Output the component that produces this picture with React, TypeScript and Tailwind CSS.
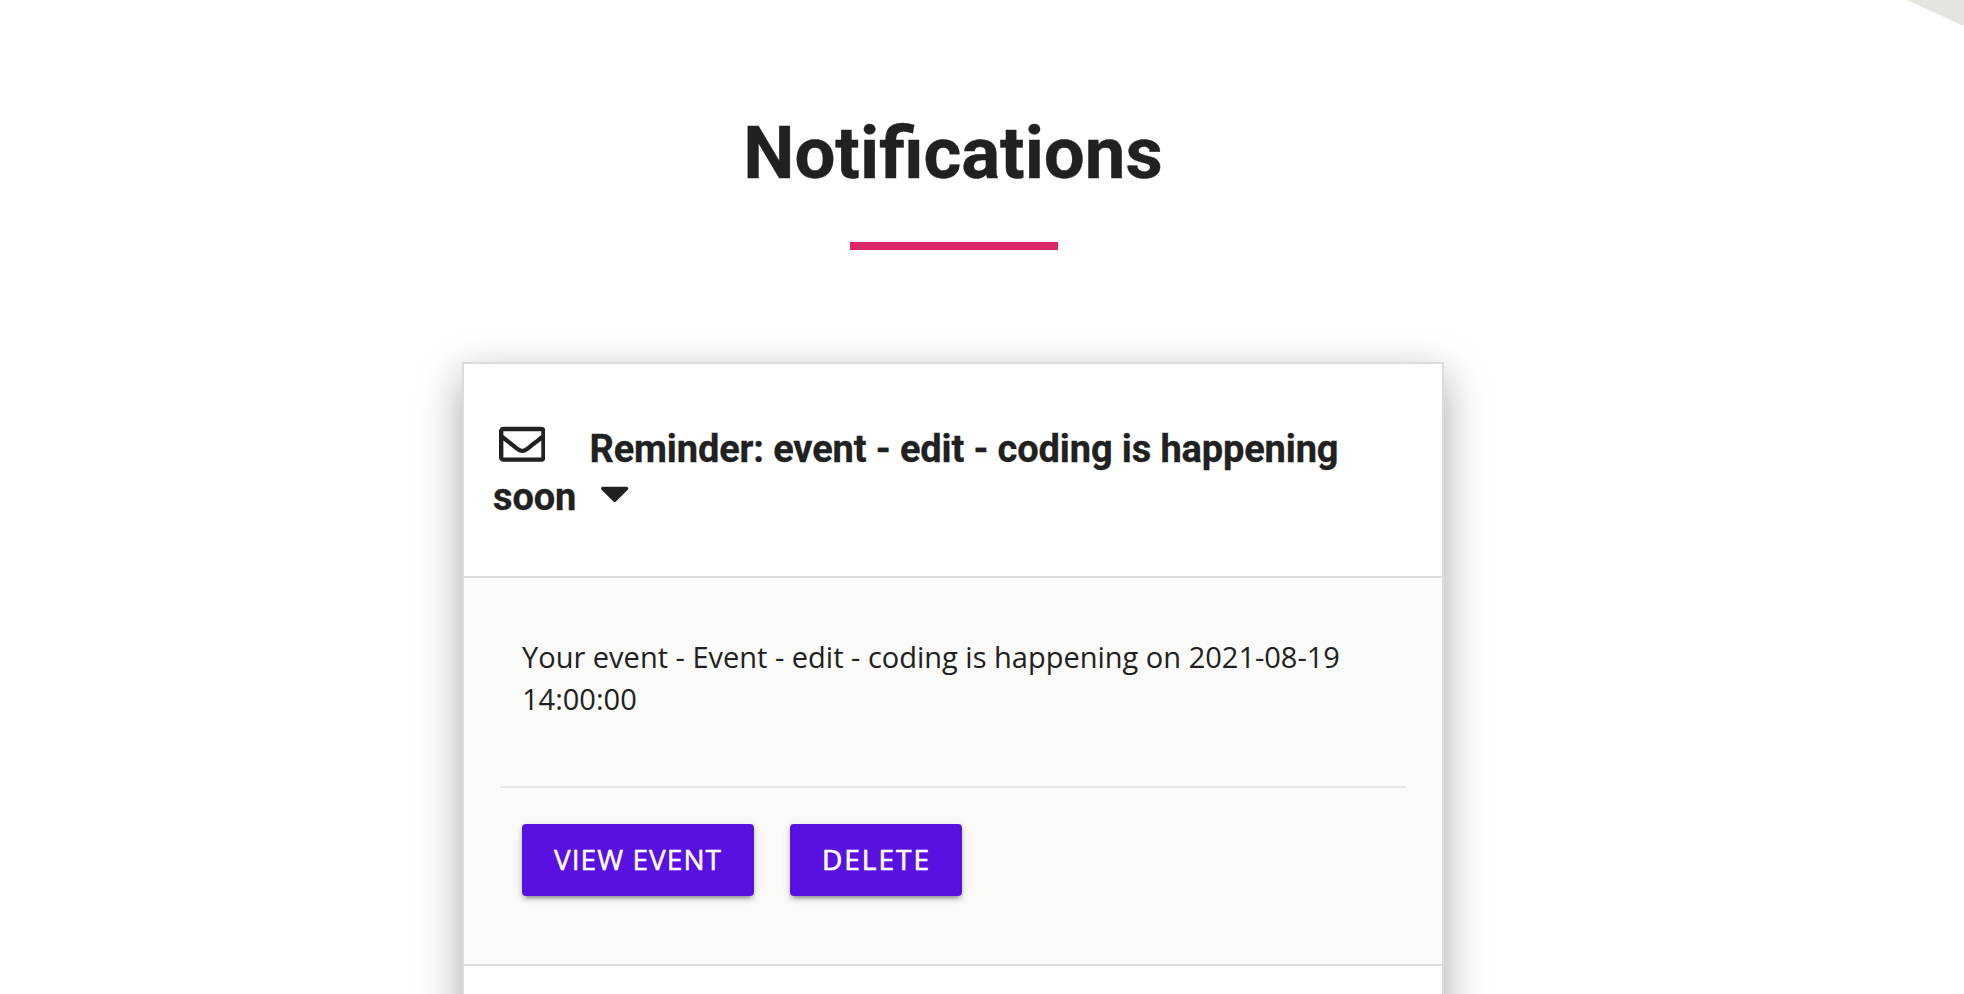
import { FaCaretDown, FaRegEnvelope } from "react-icons/fa";

function ActionButton({ label, className }: { label: string; className: string }) {
  return (
    <button
      type="button"
      className={`h-[72px] rounded-[4px] bg-[#5811e0] pb-[2px] text-[28px] leading-[49px] whitespace-nowrap text-white uppercase shadow-[0_6px_2px_-4px_rgba(0,0,0,0.2),0_4px_4px_0_rgba(0,0,0,0.14),0_2px_10px_0_rgba(0,0,0,0.12)] ${className}`}
    >
      {label}
    </button>
  );
}

export default function App() {
  return (
    <div className="relative flex h-[994px] w-[1964px] flex-col overflow-hidden bg-white font-['Open_Sans',sans-serif] text-[#212121]">
      <svg className="absolute top-0 right-0 h-[27px] w-[60px]" viewBox="0 0 60 27">
        <path d="M3 0H60V26.2Z" fill="#e4e5df" />
      </svg>

      <header className="flex w-[1906px] flex-col items-center pt-[110px]">
        <h1 className="font-['Roboto',sans-serif] text-[72.6px] leading-[87px] font-bold [-webkit-text-stroke:0.4px_#212121]">
          Notifications
        </h1>
        <div className="mt-[45px] ml-[2px] h-[8px] w-[208px] bg-[#db2768]" />
      </header>

      <main className="mt-[112px] ml-[462px] w-[982px] shrink-0 border-2 border-[#dcdcdc] bg-white shadow-[0_14px_40px_0_rgba(0,0,0,0.35)]">
        <div className="h-[214px] border-b-2 border-[#dcdcdc] px-[29px] pt-[61px]">
          <h2 className="font-['Roboto',sans-serif] text-[38px] leading-[48px] font-bold tracking-[-0.14px] [-webkit-text-stroke:0.3px_#212121]">
            <span className="flex h-[48px] items-center">
              <FaRegEnvelope className="mr-[44.3px] mb-[9px] ml-[5.5px] size-[46.7px] shrink-0" />
              Reminder: event - edit - coding is happening
            </span>
            <span className="flex h-[48px] items-center">
              soon
              <FaCaretDown className="mb-[9px] ml-[24px] h-[47px] w-[29.4px]" />
            </span>
          </h2>
        </div>
        <div className="h-[388px] border-b-2 border-[#dcdcdc] bg-[#fafaf8] px-[36px] pt-[58px]">
          <p className="w-[860px] pl-[22px] text-[29px] leading-[42px]">
            Your event - Event - edit - coding is happening on 2021-08-19 14:00:00
          </p>
          <hr className="mt-[66px] border-t-2 border-[#e7e7e6]" />
          <div className="mt-[36px] flex gap-[36px] pl-[22px]">
            <ActionButton
              label="View event"
              className="w-[232px] tracking-[1.05px] [-webkit-text-stroke:0.5px_white]"
            />
            <ActionButton
              label="Delete"
              className="w-[172px] pl-px tracking-[2px] [-webkit-text-stroke:0.7px_white]"
            />
          </div>
        </div>
        <div className="h-[214px]" />
      </main>
    </div>
  );
}
